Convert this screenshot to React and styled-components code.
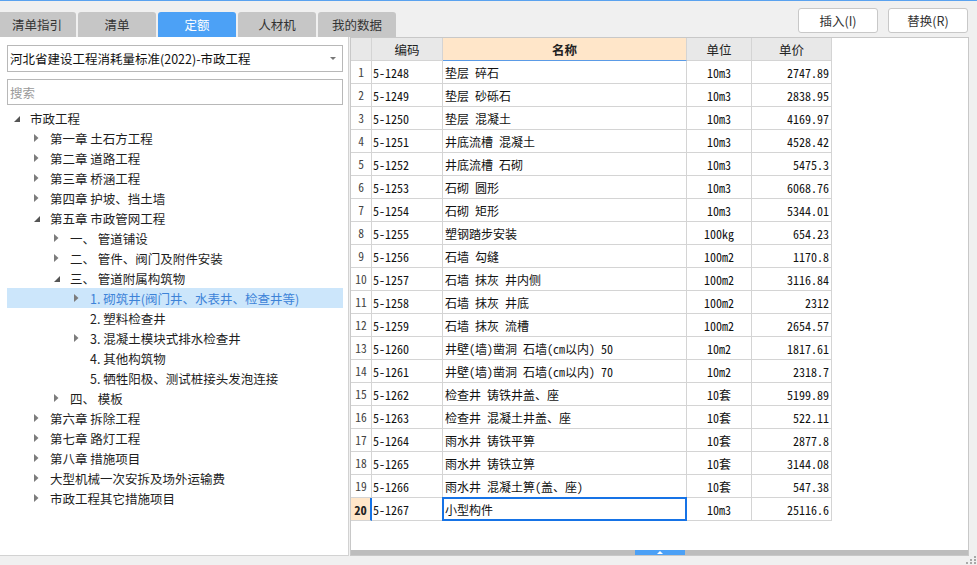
import React from "react";
import styled, { createGlobalStyle, css } from "styled-components";

const Global = createGlobalStyle`
  html, body { margin: 0; padding: 0; background: #f0f0f0; }
  body { font-family: "Noto Sans CJK SC", "Noto Sans", sans-serif; }
  * { box-sizing: border-box; }
`;

const Root = styled.div`
  width: 977px;
  height: 565px;
  background: #f0f0f0;
  border-top: 1px solid #5aa2ef;
  position: relative;
  overflow: hidden;
  display: flex;
  flex-direction: column;
  font-family: "Noto Sans CJK SC", "Noto Sans", sans-serif;
  font-size: 12px;
  color: #222;
`;

const TopBar = styled.div`
  height: 36px;
  display: flex;
  justify-content: space-between;
  align-items: flex-start;
`;

const Tabs = styled.div`
  display: flex;
  gap: 2px;
  margin-left: -2px;
  align-self: flex-end;
`;

const Tab = styled.div`
  width: 78px;
  height: 25px;
  border-radius: 3px 3px 0 0;
  display: flex;
  align-items: center;
  justify-content: center;
  font-size: 12.5px;
  background: ${(p) => (p.$active ? "#4ca1f6" : "#c6c6c6")};
  color: ${(p) => (p.$active ? "#fff" : "#333")};
`;

const Buttons = styled.div`
  display: flex;
  gap: 10px;
  margin-top: 7px;
  margin-right: 9px;
`;

const Button = styled.div`
  width: 80px;
  height: 25px;
  border: 1px solid #c8c8c8;
  border-radius: 3px;
  background: #fff;
  display: flex;
  align-items: center;
  justify-content: center;
  font-size: 12.5px;
  color: #333;
`;

const Main = styled.div`
  display: flex;
  gap: 1px;
  height: 519px;
`;

const LeftPanel = styled.div`
  width: 349px;
  background: #fff;
  border-right: 1px solid #d2d2d2;
  border-bottom: 1px solid #d2d2d2;
  padding-top: 8px;
  display: flex;
  flex-direction: column;
`;

const Select = styled.div`
  margin-left: 7px;
  width: 336px;
  height: 27px;
  border: 1px solid #b8b8b8;
  padding: 0 6px 0 2px;
  display: flex;
  align-items: center;
  justify-content: space-between;
  font-size: 12.5px;
  color: #111;
`;

const Caret = styled.span`
  width: 0;
  height: 0;
  border-left: 3px solid transparent;
  border-right: 3px solid transparent;
  border-top: 3px solid #777;
`;

const Search = styled.div`
  margin: 7px 0 0 7px;
  width: 336px;
  height: 26px;
  border: 1px solid #b8b8b8;
  padding-left: 2px;
  display: flex;
  align-items: center;
  font-size: 12.5px;
  color: #9a9a9a;
`;

const Tree = styled.div`
  margin: 3px 0 0 7px;
  width: 336px;
  display: flex;
  flex-direction: column;
`;

const TreeRow = styled.div`
  height: 20px;
  display: flex;
  align-items: center;
  padding-left: ${(p) => 7 + p.$level * 20}px;
  white-space: nowrap;
  font-size: 12.5px;
  ${(p) =>
    p.$selected
      ? css`
          background: #cce6fb;
          color: #3d83d8;
        `
      : css`
          color: #1e1e1e;
        `}
`;

const Toggle = styled.span`
  width: 16px;
  height: 20px;
  display: flex;
  align-items: center;
  flex: none;
`;

const RightPanel = styled.div`
  width: 619px;
  height: 519px;
  border: 1px solid #c8c8c8;
  background: #fff;
  display: flex;
  flex-direction: column;
  justify-content: space-between;
`;

const Grid = styled.div`
  display: grid;
  grid-template-columns: 21px 71px 244px 65px 80px;
  width: 481px;
`;

const Cell = styled.div`
  height: 23px;
  border-right: 1px solid #d4d4d4;
  border-bottom: 1px solid #d4d4d4;
  display: flex;
  align-items: center;
  white-space: nowrap;
  overflow: visible;
  position: relative;
  font-family: "Noto Sans Mono CJK SC", "Noto Sans CJK SC", monospace;
  font-size: 12px;
  color: #111;
  justify-content: ${(p) =>
    p.$align === "right" ? "flex-end" : p.$align === "center" ? "center" : "flex-start"};
  padding: ${(p) =>
    p.$align === "right" ? "0 2px 0 0" : p.$align === "center" ? "0" : `0 0 0 ${p.$pad || 1}px`};
  ${(p) =>
    p.$active &&
    css`
      &::after {
        content: "";
        position: absolute;
        left: -1px;
        top: -1px;
        right: -1px;
        bottom: -1px;
        border: 2px solid #1673e6;
      }
    `}
`;

const HeadCell = styled.div`
  height: 23px;
  border-right: 1px solid #d4d4d4;
  border-bottom: 1px solid ${(p) => (p.$hl ? "#5b9be6" : "#d4d4d4")};
  background: ${(p) => (p.$hl ? "#ffe6c9" : "#e8e8e8")};
  display: flex;
  align-items: center;
  justify-content: center;
  font-size: 12.5px;
  font-weight: ${(p) => (p.$hl ? 700 : 400)};
  color: #222;
`;

const NumCell = styled.div`
  height: 23px;
  border-right: ${(p) => (p.$current ? "2px solid #1673e6" : "1px solid #d4d4d4")};
  border-bottom: 1px solid #d4d4d4;
  background: ${(p) => (p.$current ? "#ffe6c9" : "#fff")};
  display: flex;
  align-items: center;
  justify-content: center;
  font-family: "Noto Sans Mono CJK SC", "Noto Sans CJK SC", monospace;
  font-size: ${(p) => (p.$current ? "12.5px" : "11.5px")};
  font-weight: ${(p) => (p.$current ? 700 : 400)};
  color: ${(p) => (p.$current ? "#222" : "#444")};
`;

const Strip = styled.div`
  height: 5px;
  background: #bdbdbd;
  display: flex;
  justify-content: center;
`;

const Thumb = styled.div`
  width: 50px;
  height: 5px;
  background: #4ca1f6;
  display: flex;
  align-items: center;
  justify-content: center;
`;

const Grip = styled.svg`
  position: absolute;
  right: 1px;
  bottom: 1px;
`;

const tabs = ["清单指引", "清单", "定额", "人材机", "我的数据"];

const tree = [
  { l: 0, t: "市政工程", s: "open" },
  { l: 1, t: "第一章 土石方工程", s: "closed" },
  { l: 1, t: "第二章 道路工程", s: "closed" },
  { l: 1, t: "第三章 桥涵工程", s: "closed" },
  { l: 1, t: "第四章 护坡、挡土墙", s: "closed" },
  { l: 1, t: "第五章 市政管网工程", s: "open" },
  { l: 2, t: "一、 管道铺设", s: "closed" },
  { l: 2, t: "二、 管件、阀门及附件安装", s: "closed" },
  { l: 2, t: "三、 管道附属构筑物", s: "open" },
  { l: 3, t: "1. 砌筑井(阀门井、水表井、检查井等)", s: "closed", sel: true },
  { l: 3, t: "2. 塑料检查井" },
  { l: 3, t: "3. 混凝土模块式排水检查井", s: "closed" },
  { l: 3, t: "4. 其他构筑物" },
  { l: 3, t: "5. 牺牲阳极、测试桩接头发泡连接" },
  { l: 2, t: "四、 模板", s: "closed" },
  { l: 1, t: "第六章 拆除工程", s: "closed" },
  { l: 1, t: "第七章 路灯工程", s: "closed" },
  { l: 1, t: "第八章 措施项目", s: "closed" },
  { l: 1, t: "大型机械一次安拆及场外运输费", s: "closed" },
  { l: 1, t: "市政工程其它措施项目", s: "closed" },
];

const rows = [
  ["5-1248", "垫层 碎石", "10m3", "2747.89"],
  ["5-1249", "垫层 砂砾石", "10m3", "2838.95"],
  ["5-1250", "垫层 混凝土", "10m3", "4169.97"],
  ["5-1251", "井底流槽 混凝土", "10m3", "4528.42"],
  ["5-1252", "井底流槽 石砌", "10m3", "5475.3"],
  ["5-1253", "石砌 圆形", "10m3", "6068.76"],
  ["5-1254", "石砌 矩形", "10m3", "5344.01"],
  ["5-1255", "塑钢踏步安装", "100kg", "654.23"],
  ["5-1256", "石墙 勾缝", "100m2", "1170.8"],
  ["5-1257", "石墙 抹灰 井内侧", "100m2", "3116.84"],
  ["5-1258", "石墙 抹灰 井底", "100m2", "2312"],
  ["5-1259", "石墙 抹灰 流槽", "100m2", "2654.57"],
  ["5-1260", "井壁(墙)凿洞 石墙(㎝以内) 50", "10m2", "1817.61"],
  ["5-1261", "井壁(墙)凿洞 石墙(㎝以内) 70", "10m2", "2318.7"],
  ["5-1262", "检查井 铸铁井盖、座", "10套", "5199.89"],
  ["5-1263", "检查井 混凝土井盖、座", "10套", "522.11"],
  ["5-1264", "雨水井 铸铁平箅", "10套", "2877.8"],
  ["5-1265", "雨水井 铸铁立箅", "10套", "3144.08"],
  ["5-1266", "雨水井 混凝土箅(盖、座)", "10套", "547.38"],
  ["5-1267", "小型构件", "10m3", "25116.6"],
];

function Arrow({ state }) {
  if (state === "open")
    return (
      <svg width="7" height="8" viewBox="0 0 7 8">
        <path d="M6 2 L6 8 L0 8 Z" fill="#555" />
      </svg>
    );
  if (state === "closed")
    return (
      <svg width="5" height="8" viewBox="0 0 5 8">
        <path d="M0 0 L4.5 4 L0 8 Z" fill="#7c7c7c" />
      </svg>
    );
  return null;
}

export default function App() {
  return (
    <>
      <Global />
      <Root>
        <TopBar>
          <Tabs>
            {tabs.map((t) => (
              <Tab key={t} $active={t === "定额"}>
                {t}
              </Tab>
            ))}
          </Tabs>
          <Buttons>
            <Button>插入(I)</Button>
            <Button>替换(R)</Button>
          </Buttons>
        </TopBar>
        <Main>
          <LeftPanel>
            <Select>
              <span>河北省建设工程消耗量标准(2022)-市政工程</span>
              <Caret />
            </Select>
            <Search>搜索</Search>
            <Tree>
              {tree.map((n, i) => (
                <TreeRow key={i} $level={n.l} $selected={n.sel}>
                  <Toggle>
                    <Arrow state={n.s} />
                  </Toggle>
                  <span>{n.t}</span>
                </TreeRow>
              ))}
            </Tree>
          </LeftPanel>
          <RightPanel>
            <Grid>
              <HeadCell />
              <HeadCell>编码</HeadCell>
              <HeadCell $hl>名称</HeadCell>
              <HeadCell>单位</HeadCell>
              <HeadCell>单价</HeadCell>
              {rows.map((r, i) => {
                const cur = i === rows.length - 1;
                return (
                  <React.Fragment key={r[0]}>
                    <NumCell $current={cur}>{i + 1}</NumCell>
                    <Cell $pad={1}>{r[0]}</Cell>
                    <Cell $pad={2} $active={cur}>
                      {r[1]}
                    </Cell>
                    <Cell $align="center">{r[2]}</Cell>
                    <Cell $align="right">{r[3]}</Cell>
                  </React.Fragment>
                );
              })}
            </Grid>
            <Strip>
              <Thumb>
                <svg width="6" height="3" viewBox="0 0 6 3">
                  <path d="M3 0 L6 3 L0 3 Z" fill="#fff" />
                </svg>
              </Thumb>
            </Strip>
          </RightPanel>
        </Main>
        <Grip width="10" height="8" viewBox="0 0 10 8">
          <rect x="8" y="0" width="2" height="2" fill="#a8a8a8" />
          <rect x="4" y="3" width="2" height="2" fill="#a8a8a8" />
          <rect x="8" y="3" width="2" height="2" fill="#a8a8a8" />
          <rect x="0" y="6" width="2" height="2" fill="#a8a8a8" />
          <rect x="4" y="6" width="2" height="2" fill="#a8a8a8" />
          <rect x="8" y="6" width="2" height="2" fill="#a8a8a8" />
        </Grip>
      </Root>
    </>
  );
}
